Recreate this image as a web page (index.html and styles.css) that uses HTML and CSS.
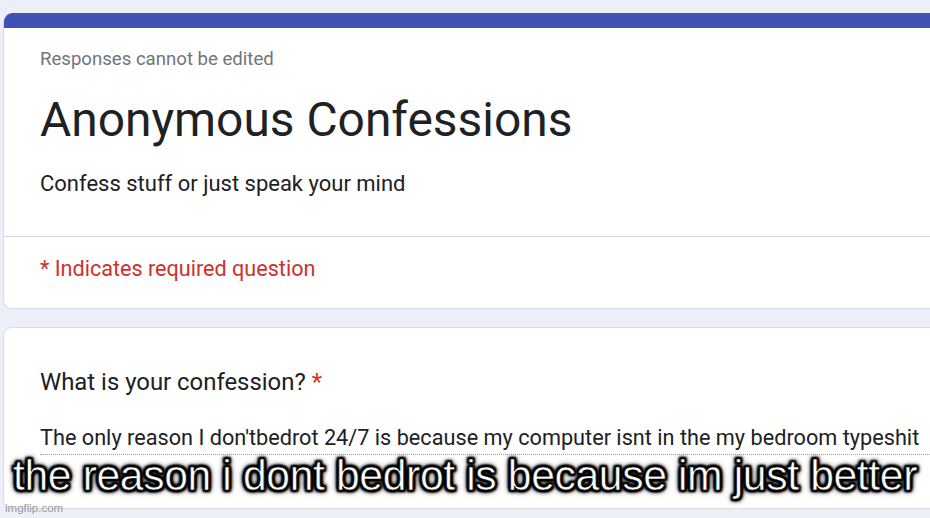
FILE: index.html
```html
<!DOCTYPE html>
<html>
<head>
<meta charset="utf-8">
<link rel="stylesheet" href="styles.css">
</head>
<body>
<div class="page">
  <div class="card header-card">
    <div class="band"></div>
    <div class="head-body">
      <div class="note">Responses cannot be edited</div>
      <h1 class="title">Anonymous Confessions</h1>
      <div class="desc">Confess stuff or just speak your mind</div>
    </div>
    <div class="req-row">
      <div class="req">* Indicates required question</div>
    </div>
  </div>
  <div class="card q-card">
    <div class="question">What is your confession? <span class="star">*</span></div>
    <div class="answer">The only reason I don'tbedrot 24/7 is because my computer isnt in the my bedroom typeshit</div>
  </div>
</div>
<div class="caption">the reason i dont bedrot is because im just better</div>
<div class="watermark">imgflip.com</div>
</body>
</html>
```
FILE: styles.css
```css
html, body {
  margin: 0;
  padding: 0;
}
body {
  width: 930px;
  height: 518px;
  overflow: hidden;
  background: #eceef8;
  font-family: Roboto, "Liberation Sans", Arial, sans-serif;
  position: relative;
}
.page {
  padding: 13px 0 0 3px;
  display: flex;
  flex-direction: column;
  gap: 18px;
}
.card {
  background: #fff;
  border: 1px solid #dadce0;
  border-right: none;
  border-radius: 9px 0 0 9px;
  overflow: hidden;
}
.header-card {
  border-top: none;
}
.band {
  height: 15px;
  background: #3f51b5;
}
.head-body {
  padding: 19px 36px 0 36px;
  height: 209px;
  box-sizing: border-box;
  border-bottom: 1px solid #dadce0;
}
.note {
  font-size: 18.6px;
  color: #70757a;
  line-height: 24px;
}
.title {
  margin: 21px 0 0 0;
  font-weight: 400;
  font-size: 47.9px;
  line-height: 56px;
  color: #202124;
}
.desc {
  margin-top: 22px;
  font-size: 22px;
  line-height: 28px;
  color: #202124;
}
.req-row {
  height: 71px;
  padding: 18px 36px 0 36px;
  box-sizing: border-box;
}
.req {
  font-size: 21.6px;
  line-height: 28px;
  color: #d0302a;
}
.q-card {
  height: 182px;
  box-sizing: border-box;
  padding: 38px 0 0 36px;
}
.question {
  font-size: 23.9px;
  line-height: 32px;
  color: #202124;
}
.star {
  color: #d93025;
}
.answer {
  margin-top: 26px;
  font-size: 21.7px;
  line-height: 28px;
  color: #202124;
  padding-bottom: 2px;
  border-bottom: 1px dotted #9aa0a6;
  white-space: nowrap;
}
.caption {
  position: absolute;
  left: 0;
  right: 0;
  top: 450px;
  text-align: center;
  font-family: "Liberation Sans", Arial, sans-serif;
  font-size: 42.7px;
  line-height: 50px;
  color: #fff;
  letter-spacing: -0.38px;
  -webkit-text-stroke: 0.6px #000;
  text-shadow:
    2px 2px 2px #000, -2px -2px 2px #000, 2px -2px 2px #000, -2px 2px 2px #000,
    0 2px 2px #000, 0 -2px 2px #000, 2px 0 2px #000, -2px 0 2px #000,
    0 0 5px #000, 0 0 6px #000, 0 0 7px rgba(0,0,0,0.8);
}
.watermark {
  position: absolute;
  left: 5px;
  top: 502px;
  font-family: "Liberation Sans", Arial, sans-serif;
  font-size: 11.5px;
  color: #9a9a9a;
}
```
